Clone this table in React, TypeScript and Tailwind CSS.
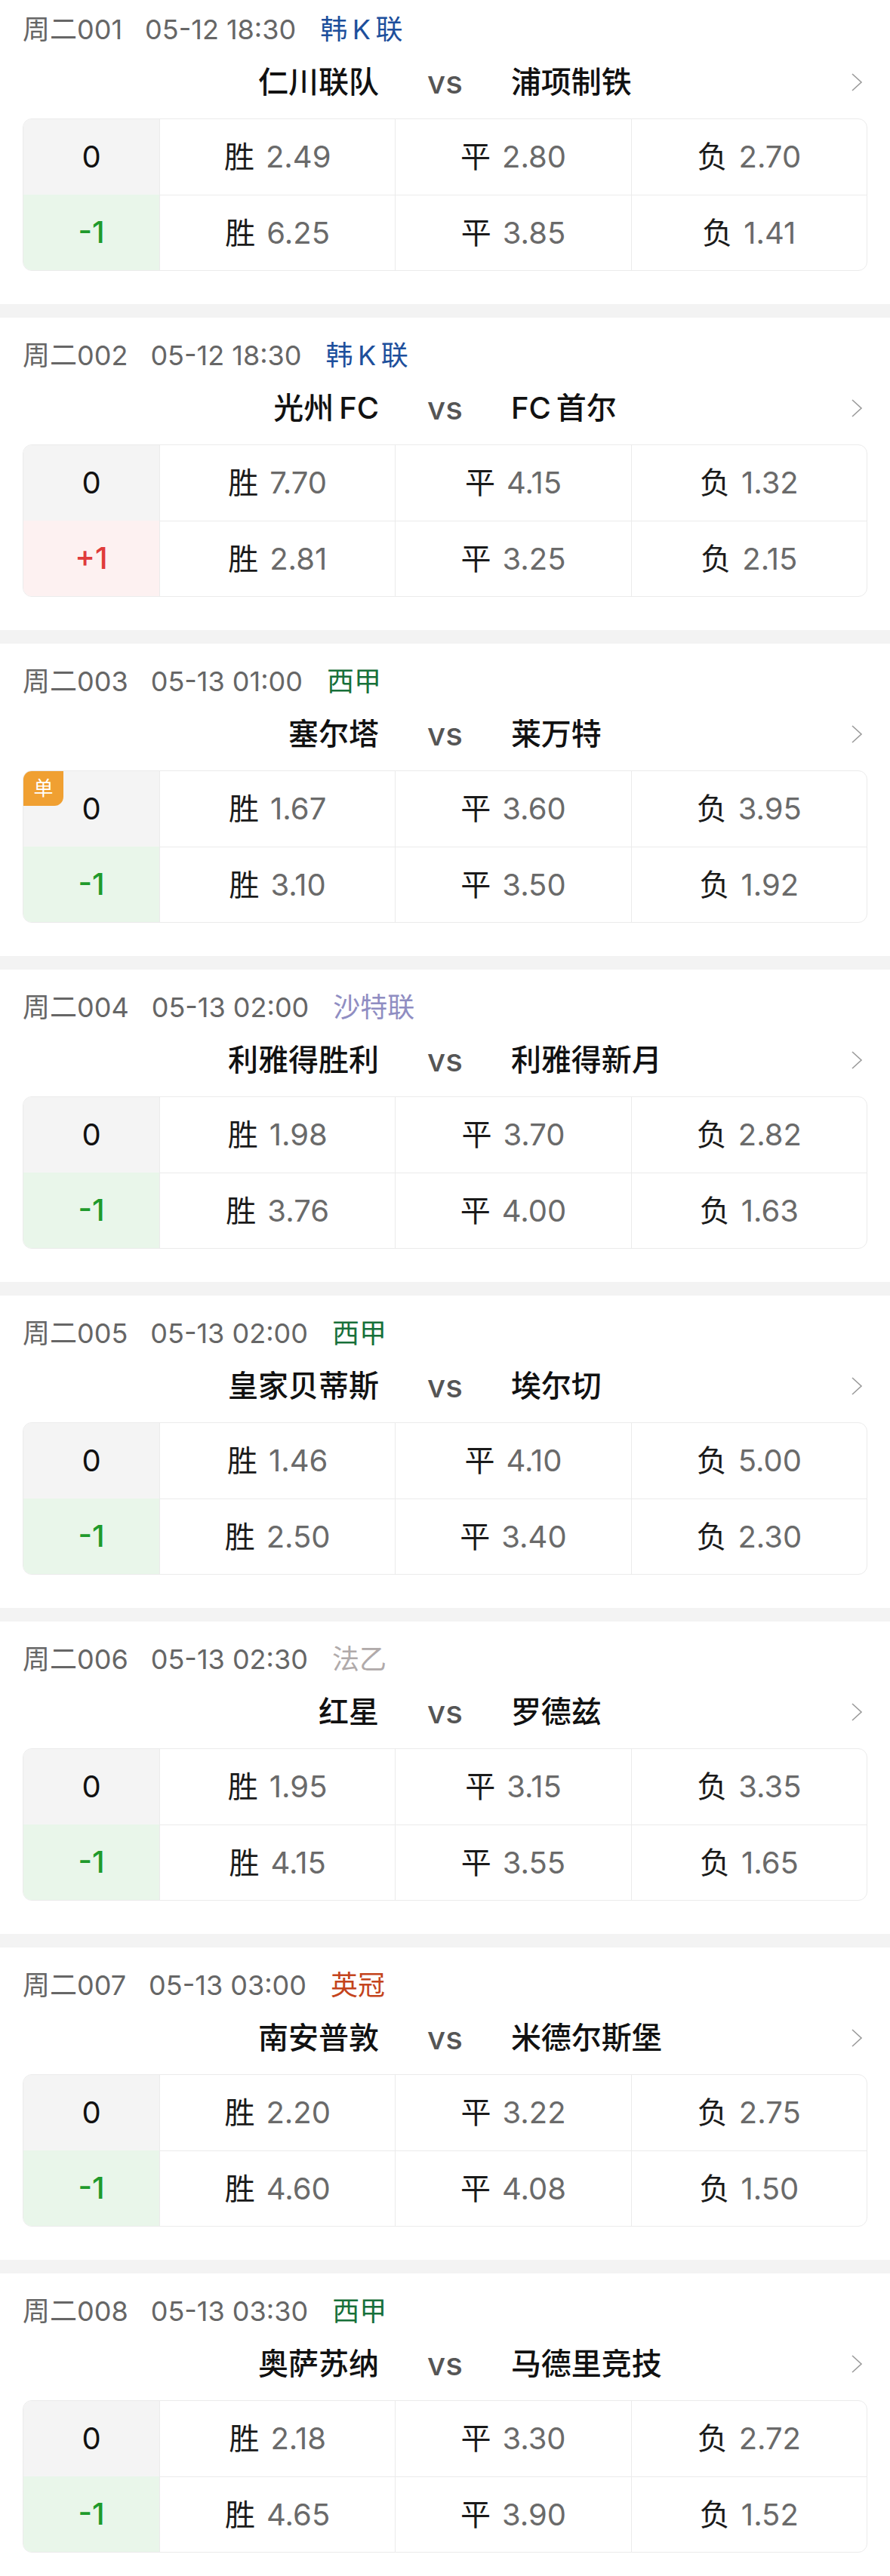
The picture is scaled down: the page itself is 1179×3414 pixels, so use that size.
import React from "react";

type Match = {
    no: string;
    time: string;
    league: string;
    leagueColor: string;
    home: string;
    away: string;
    handicap: string;
    single?: boolean;
    odds: [string, string, string];
    hOdds: [string, string, string];
};

const matches: Match[] = [
    { no: "周二001", time: "05-12 18:30", league: "韩\u2009K\u2009联", leagueColor: "text-[#1d4f9c]", home: "仁川联队", away: "浦项制铁", handicap: "-1", odds: ["2.49", "2.80", "2.70"], hOdds: ["6.25", "3.85", "1.41"] },
    { no: "周二002", time: "05-12 18:30", league: "韩\u2009K\u2009联", leagueColor: "text-[#1d4f9c]", home: "光州\u2009FC", away: "FC\u2009首尔", handicap: "+1", odds: ["7.70", "4.15", "1.32"], hOdds: ["2.81", "3.25", "2.15"] },
    { no: "周二003", time: "05-13 01:00", league: "西甲", leagueColor: "text-[#17703a]", home: "塞尔塔", away: "莱万特", handicap: "-1", single: true, odds: ["1.67", "3.60", "3.95"], hOdds: ["3.10", "3.50", "1.92"] },
    { no: "周二004", time: "05-13 02:00", league: "沙特联", leagueColor: "text-[#8f8dc2]", home: "利雅得胜利", away: "利雅得新月", handicap: "-1", odds: ["1.98", "3.70", "2.82"], hOdds: ["3.76", "4.00", "1.63"] },
    { no: "周二005", time: "05-13 02:00", league: "西甲", leagueColor: "text-[#17703a]", home: "皇家贝蒂斯", away: "埃尔切", handicap: "-1", odds: ["1.46", "4.10", "5.00"], hOdds: ["2.50", "3.40", "2.30"] },
    { no: "周二006", time: "05-13 02:30", league: "法乙", leagueColor: "text-[#b0aaaa]", home: "红星", away: "罗德兹", handicap: "-1", odds: ["1.95", "3.15", "3.35"], hOdds: ["4.15", "3.55", "1.65"] },
    { no: "周二007", time: "05-13 03:00", league: "英冠", leagueColor: "text-[#c4441c]", home: "南安普敦", away: "米德尔斯堡", handicap: "-1", odds: ["2.20", "3.22", "2.75"], hOdds: ["4.60", "4.08", "1.50"] },
    { no: "周二008", time: "05-13 03:30", league: "西甲", leagueColor: "text-[#17703a]", home: "奥萨苏纳", away: "马德里竞技", handicap: "-1", odds: ["2.18", "3.30", "2.72"], hOdds: ["4.65", "3.90", "1.52"] },
];

const labels = ["胜", "平", "负"];

function OddsCell({ label, value, top }: { label: string; value: string; top?: boolean }) {
    return (
        <div
            className={`flex items-center justify-center gap-[15px] border-l-[1.5px] border-[#ebebeb] h-[100px] ${top ? "" : "border-t-[1.5px]"}`}
        >
            <span className="text-[#1a1a1a]">{label}</span>
            <span className="text-[#6a6a6a]">{value}</span>
        </div>
    );
}

function MatchCard({ m, first }: { m: Match; first?: boolean }) {
    const plus = m.handicap.startsWith("+");
    return (
        <div className={`bg-white px-[30px] pb-[44px] ${first ? "pt-[17px]" : "pt-[28px]"}`}>
            <div className="flex items-center h-[44px] text-[36px] leading-[44px] text-[#666]">
                <span>{m.no}</span>
                <span className="ml-[30px]">{m.time}</span>
                <span className={`ml-[32px] ${m.leagueColor}`}>{m.league}</span>
            </div>

            <div className="relative mt-[20px] grid grid-cols-[1fr_auto_1fr] items-center h-[56px]">
                <div className="text-right text-[40px] font-medium text-[#111] leading-[56px]">{m.home}</div>
                <div className="px-[64px] text-[42px] font-medium text-[#555] leading-[56px]">vs</div>
                <div className="text-left text-[40px] font-medium text-[#111] leading-[56px]">{m.away}</div>
                <svg
                    className="absolute right-[5px] top-1/2 -translate-y-1/2"
                    width="17"
                    height="26"
                    viewBox="0 0 17 26"
                    fill="none"
                >
                    <path d="M2 2L14 13L2 24" stroke="#9a9a9a" strokeWidth="1.6" />
                </svg>
            </div>

            <div className="relative mt-[20px] rounded-[12px] border-[1.5px] border-[#ebebeb] overflow-hidden grid grid-cols-[180px_1fr_1fr_1fr] text-[40px] leading-none">
                <div className="flex items-center justify-center h-[100px] bg-[#f4f4f4] text-[#111]">0</div>
                {m.odds.map((o, i) => (
                    <OddsCell key={i} label={labels[i]} value={o} top />
                ))}
                <div
                    className={`flex items-center justify-center h-[100px] font-medium ${plus ? "bg-[#fdf1f1] text-[#e03b3b]" : "bg-[#e9f6ea] text-[#1f9a2c]"}`}
                >
                    {m.handicap}
                </div>
                {m.hOdds.map((o, i) => (
                    <OddsCell key={i} label={labels[i]} value={o} />
                ))}
                {m.single && (
                    <div className="absolute left-0 top-0 w-[53px] h-[46px] bg-[#f0a032] rounded-br-[12px] flex items-center justify-center text-white text-[26px]">
                        单
                    </div>
                )}
            </div>
        </div>
    );
}

export default function App() {
    return (
        <div
            className="w-[1179px] bg-[#f3f3f3] flex flex-col gap-[18px]"
            style={{ fontFamily: '"Inter", "Noto Sans CJK SC", "Noto Sans", sans-serif' }}
        >
            {matches.map((m, i) => (
                <MatchCard key={m.no} m={m} first={i === 0} />
            ))}
        </div>
    );
}
